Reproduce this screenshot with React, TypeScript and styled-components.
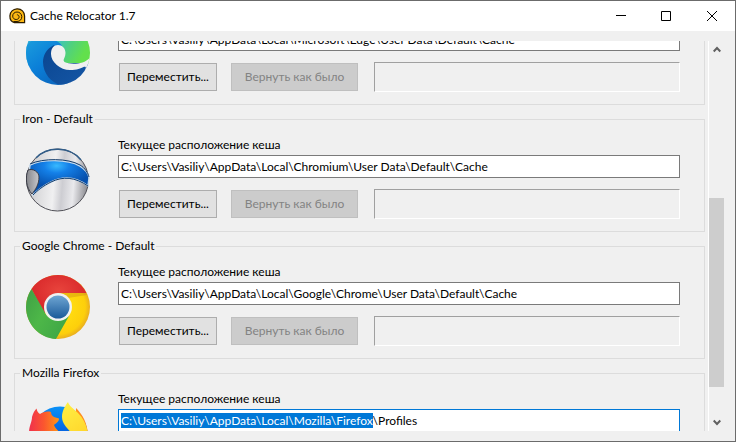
import React, { useId, useLayoutEffect, useRef } from "react";
import styled, { createGlobalStyle, css } from "styled-components";

const GlobalStyle = createGlobalStyle`
  *, *::before, *::after { box-sizing: border-box; }
  body { margin: 0; }
  body, button, input { font-family: Lato, "Open Sans", sans-serif; font-size: 12px; line-height: 16px; color: #000; }
`;

const AppWindow = styled.div`
  display: flex;
  flex-direction: column;
  height: 100vh;
  background: #f0f0f0;
  border: 1px solid #6b6b6b;
`;

const TitleBar = styled.header`
  display: flex;
  flex: none;
  align-items: center;
  height: 30px;
  padding-left: 8px;
  background: #fff;
`;

const Title = styled.h1`
  flex: 1;
  margin: 0 0 0 4px;
  font-size: 12px;
  font-weight: 400;
`;

const CaptionButton = styled.button`
  display: grid;
  place-items: center;
  width: 46px;
  height: 30px;
  padding: 0;
  border: 0;
  background: transparent;
  &:hover { background: #e5e5e5; }
`;

const Content = styled.main`
  display: flex;
  flex: 1;
  min-height: 0;
  gap: 3px;
  padding: 10px 11px 10px 13px;
`;

const Viewport = styled.div`
  flex: 1;
  min-width: 0;
  overflow-y: scroll;
  scrollbar-width: none;
`;

const GroupList = styled.div`
  display: flex;
  flex-direction: column;
  gap: 6px;
`;

const Group = styled.fieldset`
  min-width: 0;
  margin: 0;
  padding: 0 24px 12px 11px;
  border: 1px solid #dcdcdc;
`;

const GroupTitle = styled.legend`
  margin-left: -6px;
  padding: 0 2px;
  height: 16px;
`;

const GroupBody = styled.div`
  display: flex;
  gap: 28px;
  padding-top: 10px;
`;

const IconSlot = styled.div`
  flex: none;
  width: 64px;
  padding-top: 11px;
  svg { display: block; }
`;

const Fields = styled.div`
  display: flex;
  flex: 1;
  flex-direction: column;
  min-width: 0;
`;

const PathInput = styled.input<{ $active?: boolean }>`
  width: 100%;
  height: 23px;
  margin-top: 2px;
  padding: 0 2px 1px;
  border: 1px solid ${(p) => (p.$active ? "#0078d7" : "#7a7a7a")};
  border-radius: 0;
  background: #fff;
  outline: none;
  &:focus { border-color: #0078d7; }
  &::selection { background: #0078d7; color: #fff; }
`;

const Actions = styled.div`
  display: flex;
  align-items: center;
  margin-top: 11px;
  padding-left: 1px;
`;

const ActionButton = styled.button<{ $wide?: boolean }>`
  flex: none;
  width: ${(p) => (p.$wide ? 127 : 98)}px;
  height: 28px;
  margin-right: ${(p) => (p.$wide ? 16 : 14)}px;
  padding: 0;
  border: 1px solid #adadad;
  background: #e1e1e1;
  white-space: nowrap;
  ${(p) =>
    p.disabled &&
    css`
      border-color: #bfbfbf;
      background: #ccc;
      color: #838383;
    `}
`;

const StatusPanel = styled.div`
  flex: 1;
  height: 30px;
  border: 1px solid;
  border-color: #a0a0a0 #fff #fff #a0a0a0;
`;

const ScrollBar = styled.div`
  display: flex;
  flex: none;
  flex-direction: column;
  width: 16px;
  border-left: 1px solid #fff;
`;

const ScrollButton = styled.button`
  display: grid;
  flex: none;
  place-items: center;
  height: 17px;
  padding: 0;
  border: 0;
  background: transparent;
`;

const TrackPart = styled.div<{ $size: number; $thumb?: boolean }>`
  flex: ${(p) => p.$size} 1 0;
  background: ${(p) => (p.$thumb ? "#cdcdcd" : "transparent")};
`;

function SnailLogo() {
  return (
    <svg width="17" height="16" viewBox="0 0 17 16" fill="none" aria-hidden="true">
      <path d="M8 .8C12.500.600 15.600 4 15.600 8v6.700H5.500C2.500 14 .8 11 .9 7.800 1.100 4 4 1 8 .8z" fill="#fdb813" stroke="#2b1c00" strokeWidth="1.200" />
      <path d="M4.500 13.500H8c3 0 5-2.300 4.800-5C12.600 5.800 10.500 4 8 4 5.500 4 3.700 5.800 3.700 8.100c0 2 1.600 3.500 3.500 3.400 1.700 0 3-1.200 2.900-2.800C10 7.500 9 6.700 7.900 6.800" stroke="#2b1c00" strokeWidth="1" />
    </svg>
  );
}

function EdgeIcon() {
  const id = useId();
  return (
    <svg width="64" height="64" viewBox="0 0 64 64" aria-hidden="true">
      <defs>
        <linearGradient id={id + "a"} x1="0" y1="0.200" x2="0.600" y2="1">
          <stop offset="0" stopColor="#1897dc" />
          <stop offset=".5" stopColor="#0b7fd8" />
          <stop offset="1" stopColor="#0b68c0" />
        </linearGradient>
        <linearGradient id={id + "b"} x1="0" y1=".1" x2="1" y2=".5">
          <stop offset="0" stopColor="#1e9fdc" />
          <stop offset=".5" stopColor="#39bfd0" />
          <stop offset=".75" stopColor="#4fd080" />
          <stop offset="1" stopColor="#62e04c" />
        </linearGradient>
        <linearGradient id={id + "c"} x1="0" y1="0" x2="1" y2="1">
          <stop offset="0" stopColor="#0a4590" />
          <stop offset="1" stopColor="#1557a6" />
        </linearGradient>
        <clipPath id={id + "d"}>
          <circle cx="32" cy="32" r="32" />
        </clipPath>
      </defs>
      <g clipPath={`url(#${id}d)`}>
        <path d="M0 0H64V44H0z" fill={`url(#${id}b)`} />
        <path d="M0 26C4 19 12 16 20 17C28 18 34 21 36 25L32 44L44 64H0z" fill={`url(#${id}a)`} />
        <path d="M28 24C20 28 17 35 17 41C17 52 25 62 35 64H64V42H34z" fill={`url(#${id}c)`} />
        <path d="M66 34C60 44 45 44 38.500 41C36 39 39.500 37 39.500 32C39.500 27 36 24 32 24C28 24 25 27 25 33C25 41 34 49 44 49C51 49 55 47.500 57.500 46C60 45 60.500 47 59 49L66 60z" fill="#f0f0f0" />
      </g>
    </svg>
  );
}

function IronIcon() {
  const id = useId();
  return (
    <svg width="64" height="64" viewBox="0 0 64 64" aria-hidden="true">
      <defs>
        <linearGradient id={id + "a"} x1="0" y1="0" x2="1" y2=".08">
          <stop offset="0" stopColor="#c0c0c4" />
          <stop offset=".25" stopColor="#dcdcde" />
          <stop offset=".48" stopColor="#f0f0f1" />
          <stop offset=".62" stopColor="#cdcdd2" />
          <stop offset=".8" stopColor="#e9e9ec" />
          <stop offset="1" stopColor="#96969b" />
        </linearGradient>
        <radialGradient id={id + "b"} cx=".46" cy=".15" r=".6">
          <stop offset="0" stopColor="#38baff" />
          <stop offset=".35" stopColor="#1480e8" />
          <stop offset="1" stopColor="#0650ad" />
        </radialGradient>
        <linearGradient id={id + "c"}>
          <stop stopColor="#85868b" />
          <stop offset="1" stopColor="#c8c8cc" />
        </linearGradient>
      </defs>
      <circle cx="31.500" cy="32" r="31" fill={`url(#${id}a)`} stroke="#505057" />
      <path d="M10 10C21-2 44-2 55 12" fill="none" stroke="#315d89" strokeWidth="1.500" />
      <path d="M4 17C16 11 41 11 54 18C59 21 63 26 63 30L62 38C50 29 37 28 25 34C17 38 12 42 7 47L3 25z" fill={`url(#${id}b)`} stroke="#c9dced" strokeWidth="1.500" />
      <path d="M4 16C17 10 42 10 54 17C59 20 62 25 63 29M62 38C49 29 37 28 25 34C17 38 12 42 7 47" fill="none" stroke="#123b6a" />
      <path d="M2 22C7 20 13 24 13 29C13 36 10 41 6 46C0 40-1 29 2 22z" fill={`url(#${id}c)`} stroke="#3a3c46" />
    </svg>
  );
}

function ChromeIcon() {
  const id = useId();
  return (
    <svg width="64" height="64" viewBox="0 0 64 64" aria-hidden="true">
      <defs>
        <radialGradient id={id + "r"} cx=".5" cy=".4" r=".6">
          <stop stopColor="#e8443c" />
          <stop offset="1" stopColor="#d62428" />
        </radialGradient>
        <linearGradient id={id + "g"} x1="0" y1="0" x2="1" y2=".6">
          <stop stopColor="#3fa045" />
          <stop offset=".5" stopColor="#4db748" />
          <stop offset="1" stopColor="#40a846" />
        </linearGradient>
        <radialGradient id={id + "y"} cx=".5" cy=".5" r=".5">
          <stop offset=".5" stopColor="#ffd90f" />
          <stop offset=".85" stopColor="#fdcf0b" />
          <stop offset="1" stopColor="#e9ae20" />
        </radialGradient>
        <linearGradient id={id + "b"} x1="0" y1="0" x2="0" y2="1">
          <stop stopColor="#6fa6d3" />
          <stop offset="1" stopColor="#1b5a9a" />
        </linearGradient>
      </defs>
      <circle cx="32" cy="32" r="32" fill={`url(#${id}y)`} />
      <path d="M32 18H60.500L61 20L42 23z" fill="#c98e12" opacity=".4" />
      <path d="M60.500 18H32L18 39L5.500 14C11 5.500 21 0 32 0C44 0 55 7 60.500 18z" fill={`url(#${id}r)`} />
      <path d="M5.500 14L18 36C22 45 33 48 43 41L30 64C13 63 0 49 0 32C0 25.500 2 19 5.500 14z" fill={`url(#${id}g)`} />
      <circle cx="32" cy="32" r="14" fill="#f1f1f1" />
      <circle cx="32" cy="32" r="11.500" fill={`url(#${id}b)`} />
    </svg>
  );
}

function FirefoxIcon() {
  const id = useId();
  return (
    <svg width="64" height="64" viewBox="0 0 64 64" aria-hidden="true">
      <defs>
        <linearGradient id={id + "o"} x1="0" y1=".2" x2="1" y2=".2">
          <stop stopColor="#f0304d" />
          <stop offset=".25" stopColor="#fb562f" />
          <stop offset=".5" stopColor="#ff9419" />
          <stop offset="1" stopColor="#ff8a1f" />
        </linearGradient>
        <linearGradient id={id + "y"} x1="0" y1="0" x2=".3" y2="1">
          <stop stopColor="#fff045" />
          <stop offset="1" stopColor="#ffcf24" />
        </linearGradient>
        <linearGradient id={id + "b"} x1="0" y1="0" x2="0" y2="1">
          <stop stopColor="#0a91f7" />
          <stop offset=".5" stopColor="#0560df" />
          <stop offset="1" stopColor="#362f91" />
        </linearGradient>
      </defs>
      <circle cx="34" cy="32" r="27.500" fill={`url(#${id}b)`} />
      <path d="M3 31C3 24 6 20 6 15C7 11 9 8 10.500 6.500C11 9 12 11 14 12C17 10 21 9 25 10C25 12 26 14 28 15L33 16.500C33 20 30 21 28 23C29 26 31 27 33 30C27 29 24 33 24 37C31 46 44 43 49 34L50 6C54 10 61 18 62 32C63 50 49 64 32 64C14 64 2 50 3 31z" fill={`url(#${id}o)`} />
      <path d="M42 0C43 4 48 7 52 11C58 17 61 24 62 32C62 44 53 55 42 55C47 50 49 41 46 32C44 28 36 23 36 15C36 9 39 4 42 0z" fill={`url(#${id}y)`} />
    </svg>
  );
}

interface Cache {
  name: string;
  path: string;
  icon: React.ReactNode;
  selected?: boolean;
}

const caches: Cache[] = [
  { name: "Edge - Default", path: "C:\\Users\\Vasiliy\\AppData\\Local\\Microsoft\\Edge\\User Data\\Default\\Cache", icon: <EdgeIcon /> },
  { name: "Iron - Default", path: "C:\\Users\\Vasiliy\\AppData\\Local\\Chromium\\User Data\\Default\\Cache", icon: <IronIcon /> },
  { name: "Google Chrome - Default", path: "C:\\Users\\Vasiliy\\AppData\\Local\\Google\\Chrome\\User Data\\Default\\Cache", icon: <ChromeIcon /> },
  { name: "Mozilla Firefox", path: "C:\\Users\\Vasiliy\\AppData\\Local\\Mozilla\\Firefox\\Profiles", icon: <FirefoxIcon />, selected: true },
];

function CacheGroup({ cache }: { cache: Cache }) {
  const id = useId();
  const input = useRef<HTMLInputElement>(null);
  useLayoutEffect(() => {
    if (cache.selected && input.current) {
      input.current.focus({ preventScroll: true });
      input.current.setSelectionRange(0, cache.path.lastIndexOf("\\"));
    }
  }, [cache]);
  return (
    <Group>
      <GroupTitle>{cache.name}</GroupTitle>
      <GroupBody>
        <IconSlot>{cache.icon}</IconSlot>
        <Fields>
          <label htmlFor={id}>Текущее расположение кеша</label>
          <PathInput id={id} ref={input} $active={cache.selected} defaultValue={cache.path} spellCheck={false} />
          <Actions>
            <ActionButton type="button">Переместить...</ActionButton>
            <ActionButton type="button" $wide disabled>Вернуть как было</ActionButton>
            <StatusPanel />
          </Actions>
        </Fields>
      </GroupBody>
    </Group>
  );
}

const INITIAL_SCROLL = 57;

export default function App() {
  const viewport = useRef<HTMLDivElement>(null);
  useLayoutEffect(() => {
    if (viewport.current) viewport.current.scrollTop = INITIAL_SCROLL;
  }, []);
  const scrollBy = (top: number) => viewport.current?.scrollBy({ top });

  return (
    <>
      <GlobalStyle />
      <AppWindow>
        <TitleBar>
          <SnailLogo />
          <Title>Cache Relocator 1.7</Title>
          <CaptionButton type="button" aria-label="Minimize">
            <svg width="12" height="12" viewBox="0 0 12 12" stroke="#000"><path d="M2 5.500h10" /></svg>
          </CaptionButton>
          <CaptionButton type="button" aria-label="Maximize">
            <svg width="12" height="12" viewBox="0 0 12 12" stroke="#000" fill="none"><path d="M1.500 1.500h9v9h-9z" /></svg>
          </CaptionButton>
          <CaptionButton type="button" aria-label="Close">
            <svg width="12" height="12" viewBox="0 0 12 12" stroke="#000"><path d="m1 1 10 10M11 1 1 11" /></svg>
          </CaptionButton>
        </TitleBar>
        <Content>
          <Viewport ref={viewport}>
            <GroupList>
              {caches.map((cache) => <CacheGroup key={cache.name} cache={cache} />)}
            </GroupList>
          </Viewport>
          <ScrollBar>
            <ScrollButton type="button" aria-label="Scroll up" onClick={() => scrollBy(-40)}>
              <svg width="8" height="7" viewBox="0 0 8 7" fill="none" stroke="#606060" strokeWidth="2"><path d="m.7 5.500 3.300-3.500 3.300 3.500" /></svg>
            </ScrollButton>
            <TrackPart $size={140} />
            <TrackPart $size={189} $thumb />
            <TrackPart $size={27} />
            <ScrollButton type="button" aria-label="Scroll down" onClick={() => scrollBy(40)}>
              <svg width="8" height="7" viewBox="0 0 8 7" fill="none" stroke="#606060" strokeWidth="2"><path d="M.7 1.500 4 5l3.300-3.500" /></svg>
            </ScrollButton>
          </ScrollBar>
        </Content>
      </AppWindow>
    </>
  );
}
